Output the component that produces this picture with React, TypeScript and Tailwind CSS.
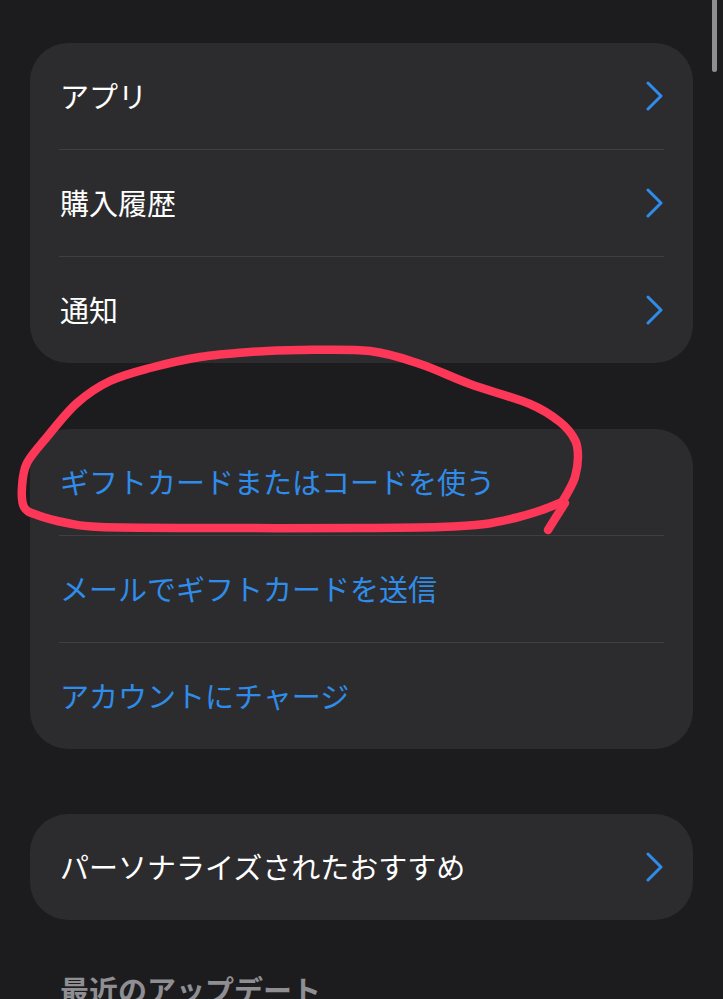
import React from "react";

const FONT = '"Noto Sans CJK JP", "Noto Sans", sans-serif';

type Pt = [number, number];

function smoothPath(pts: Pt[]): string {
  const p = [pts[0], ...pts, pts[pts.length - 1]];
  let d = `M ${p[1][0]} ${p[1][1]}`;
  for (let i = 1; i < p.length - 2; i++) {
    const p0 = p[i - 1], p1 = p[i], p2 = p[i + 1], p3 = p[i + 2];
    const c1x = p1[0] + (p2[0] - p0[0]) / 6;
    const c1y = p1[1] + (p2[1] - p0[1]) / 6;
    const c2x = p2[0] - (p3[0] - p1[0]) / 6;
    const c2y = p2[1] - (p3[1] - p1[1]) / 6;
    d += ` C ${c1x.toFixed(1)} ${c1y.toFixed(1)}, ${c2x.toFixed(1)} ${c2y.toFixed(1)}, ${p2[0]} ${p2[1]}`;
  }
  return d;
}

const loop: Pt[] = [
  [562, 502],
  [568, 492],
  [575, 477],
  [578, 457],
  [575, 440],
  [560, 422],
  [530, 404],
  [470, 384],
  [420, 364],
  [370, 351],
  [300, 350],
  [250, 352],
  [200, 357],
  [150, 368],
  [110, 381],
  [77, 403],
  [47, 437],
  [27, 463],
  [22, 487],
  [24, 507],
  [37, 515],
  [67, 523],
  [100, 527],
  [200, 528],
  [360, 528],
  [440, 527],
  [485, 524],
  [515, 518],
  [542, 510],
  [562, 502],
];

function Chevron() {
  return (
    <svg width="20" height="30" viewBox="0 0 20 30" className="shrink-0 -mr-[2px]">
      <path d="M3 2 L16 15 L3 28" fill="none" stroke="#2f8cea" strokeWidth="3" strokeLinecap="round" strokeLinejoin="round" />
    </svg>
  );
}

function Row({ label, blue = false, chevron = false }: { label: string; blue?: boolean; chevron?: boolean }) {
  return (
    <div className="h-[106px] flex items-center justify-between px-[30px]">
      <span className={`text-[29px] leading-none -mt-[2px] ${blue ? "text-[#2f8cea]" : "text-white"}`}>{label}</span>
      {chevron && <Chevron />}
    </div>
  );
}

function Sep() {
  return <div className="h-px mx-[29px] bg-[#3f3f42]" />;
}

export default function App() {
  return (
    <div className="relative w-full h-[999px] overflow-hidden bg-[#1c1c1e]" style={{ fontFamily: FONT }}>
      <div className="px-[30px] pt-[43px] flex flex-col">
        <div className="rounded-[38px] bg-[#2c2c2e] flex flex-col">
          <Row label="アプリ" chevron />
          <Sep />
          <Row label="購入履歴" chevron />
          <Sep />
          <Row label="通知" chevron />
        </div>

        <div className="mt-[66px] rounded-[38px] bg-[#2c2c2e] flex flex-col">
          <Row label="ギフトカードまたはコードを使う" blue />
          <Sep />
          <Row label="メールでギフトカードを送信" blue />
          <Sep />
          <Row label="アカウントにチャージ" blue />
        </div>

        <div className="mt-[65px] rounded-[38px] bg-[#2c2c2e] flex flex-col">
          <Row label="パーソナライズされたおすすめ" chevron />
        </div>

        <div className="mt-[55px] px-[30px]">
          <span className="text-[29px] leading-none font-bold text-[#8e8e93]">最近のアップデート</span>
        </div>
      </div>

      <svg className="absolute inset-0 pointer-events-none" width="723" height="999" viewBox="0 0 723 999">
        <path d={smoothPath(loop)} fill="none" stroke="#fd3757" strokeWidth="8.5" strokeLinecap="round" strokeLinejoin="round" />
        <path d="M565 503 Q556 517 548 530" fill="none" stroke="#fd3757" strokeWidth="8.5" strokeLinecap="round" />
      </svg>

      <div className="absolute right-[6px] top-[-6px] w-[5px] h-[78px] rounded-full bg-[#8e8e93]" />
    </div>
  );
}
